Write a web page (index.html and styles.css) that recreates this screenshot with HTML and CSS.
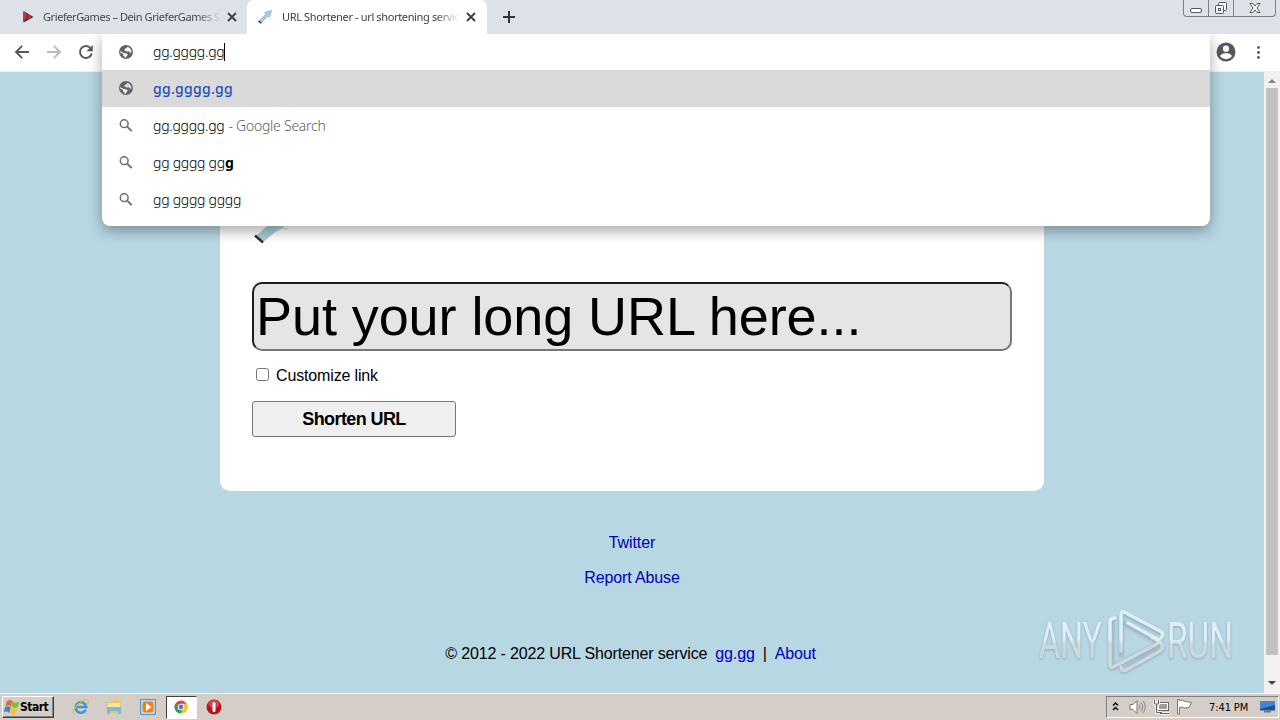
FILE: index.html
```html
<!DOCTYPE html>
<html lang="en">
<head>
<meta charset="utf-8">
<title>URL Shortener - url shortening service</title>
<link rel="stylesheet" href="styles.css">
</head>
<body>
<svg class="defs" width="0" height="0">
  <symbol id="globe" viewBox="0 0 16 16"><circle cx="8" cy="8" r="6.200" fill="none" stroke="#5f6368" stroke-width="1.500"/><path d="M2 7 5.500 8.500 8.500 9l1 1.500-1.500 1-.5 2.500A6 6 0 0 1 2 7z" fill="#f1f1f1"/><path d="M2.300 5.500A6.200 6.200 0 0 1 9.500 2L9 3.800l-2 .9-.8 1.500L8.500 7.500l2.300-.3 1.400 1.600 1.800-.3A6.200 6.200 0 0 1 8 14.200l.2-1.700 1.600-1.500-.8-1.500-3.200-.6L2 7z" fill="#5f6368"/><path d="M2.500 8.500 5 10l.3 1.700 1.500 1-.1 1.300A6 6 0 0 1 2 8z" fill="#5f6368"/></symbol>
  <symbol id="search" viewBox="0 0 16 16"><circle cx="6.200" cy="5.700" r="3.900" fill="none" stroke="#6b6e72" stroke-width="1.500"/><path d="m9.200 8.700 4.500 4.500" stroke="#6b6e72" stroke-width="1.900"/></symbol>
  <symbol id="close" viewBox="0 0 10 10"><path d="m1 1 8 8M9 1 1 9" stroke="#3c4043" stroke-width="1.900"/></symbol>
</svg>

<header class="tabstrip">
  <div class="tab">
    <svg class="fav" viewBox="0 0 16 16"><path d="M3.500 2 13.500 8 3.500 13.500z" fill="#383234"/><path d="m3 2.500 3.500 2V9L3 13zM7.500 5l4.200 3-4.200 2.300z" fill="#dc2937"/></svg>
    <span class="tab-title first">GrieferGames – Dein GrieferGames S</span>
    <svg class="x"><use href="#close"/></svg>
  </div>
  <div class="tab active">
    <svg class="fav" viewBox="0 0 16 16"><path d="M2 12 9 5 7.500 3.500 14.500 1.500 12.500 8.500 11 7l-7 7z" fill="#a8cce2" stroke="#8badc5" stroke-width=".7"/><path d="m1.500 12 2.700 2.200" stroke="#303b45" stroke-width="1.500"/></svg>
    <span class="tab-title second">URL Shortener - url shortening servic</span>
    <svg class="x"><use href="#close"/></svg>
  </div>
  <svg class="plus" viewBox="0 0 12 12"><path d="M6 0v12M0 6h12" stroke="#303338" stroke-width="2"/></svg>
  <div class="window-buttons">
    <span class="wb min"><svg width="14" height="16" viewBox="0 0 14 16"><rect x="1.500" y="8.500" width="11" height="4" rx="1.500" fill="#fff" stroke="#505762"/></svg></span>
    <span class="wb res"><svg width="14" height="16" viewBox="0 0 14 16"><g fill="#f4f6f9" stroke="#505762"><rect x="4.500" y="2.500" width="8" height="8" rx="1"/><rect x="1.500" y="5.500" width="8" height="8" rx="1"/><rect x="4.500" y="8.500" width="2" height="2"/></g></svg></span>
    <span class="wb cls"><svg width="14" height="16" viewBox="0 0 14 16"><path d="M2 3.500h3l2 2.500 2-2.500h3L9 8l3 4.500H9L7 10l-2 2.500H2L5 8z" fill="#fff" stroke="#505762"/></svg></span>
  </div>
</header>

<div class="toolbar">
  <svg class="nav" viewBox="0 0 16 16"><path d="M15 8H2.500M8.200 1.800 2 8l6.200 6.200" fill="none" stroke="#55595d" stroke-width="1.900"/></svg>
  <svg class="nav" viewBox="0 0 16 16"><path d="M1 8h12.500M7.800 1.800 14 8l-6.200 6.200" fill="none" stroke="#b9bbbe" stroke-width="1.900"/></svg>
  <svg class="nav" viewBox="0 0 16 16"><path d="M12.700 4.300A6 6 0 1 0 13.800 9.500" fill="none" stroke="#55595d" stroke-width="1.900"/><path d="M14.800 1v6.300H8.500z" fill="#55595d"/></svg>
  <span class="spacer"></span>
  <svg class="avatar" viewBox="0 0 20 20"><circle cx="10" cy="10" r="9.500" fill="#55595d"/><circle cx="10" cy="6.700" r="3.100" fill="#fff"/><path d="M4 14c1.500-2.200 4-2.700 6-2.700s4.500.5 6 2.700a7.300 7.300 0 0 1-12 0z" fill="#fff"/></svg>
  <svg class="dots" viewBox="0 0 4 16"><g fill="#55595d"><circle cx="2.500" cy="3.500" r="1.400"/><circle cx="2.500" cy="8.500" r="1.400"/><circle cx="2.500" cy="13.500" r="1.400"/></g></svg>
</div>

<section class="omnibox">
  <div class="row query"><svg><use href="#globe"/></svg><span class="q">gg.gggg.gg</span><i class="caret"></i></div>
  <div class="row selected"><svg><use href="#globe"/></svg><span class="url">gg.gggg.gg</span></div>
  <div class="row"><svg><use href="#search"/></svg><span class="q">gg.gggg.gg</span><span class="muted">- Google Search</span></div>
  <div class="row"><svg><use href="#search"/></svg><span class="q">gg gggg gg<b>g</b></span></div>
  <div class="row"><svg><use href="#search"/></svg><span class="q">gg gggg gggg</span></div>
</section>

<div class="viewport">
  <main class="page">
    <div class="card">
      <svg class="logo" width="44" height="44" viewBox="0 0 44 44"><path d="M3 35 28 12 40 20 11 38z" fill="#a9cbd9"/><path d="m3 34 7.500 6.500L32 22" fill="#a9cbd9" stroke="#c9d4d8"/><path d="m3 33.500 8 7" stroke="#2e3336" stroke-width="2.500"/><path d="m29 26 7 1" stroke="#dddcdc"/></svg>
      <form class="form">
        <input class="long-url" type="text" value="Put your long URL here...">
        <label class="custom"><input type="checkbox"><span>Customize link</span></label>
        <button class="shorten" type="button">Shorten URL</button>
      </form>
    </div>
    <nav class="links"><a>Twitter</a><a>Report Abuse</a></nav>
    <footer class="foot"><span>© 2012 - 2022 URL Shortener service</span><a>gg.gg</a><span>|</span><a>About</a></footer>
  </main>
  <aside class="scrollbar">
    <svg width="8" height="4" viewBox="0 0 8 4"><path d="M0 4 4 0l4 4z" fill="#888"/></svg>
    <span class="thumb"></span>
    <svg width="8" height="4" viewBox="0 0 8 4"><path d="m0 0 4 4 4-4z" fill="#444"/></svg>
  </aside>
</div>

<svg class="watermark" width="204" height="68" viewBox="0 0 204 68">
  <defs><linearGradient id="wg" x1="0" y1="0" x2="0" y2="68" gradientUnits="userSpaceOnUse"><stop offset=".47" stop-color="#e0eff7"/><stop offset=".55" stop-color="#ced9df"/></linearGradient></defs>
  <g class="wm-text" fill="url(#wg)"><text x="3" y="51" textLength="63" lengthAdjust="spacingAndGlyphs">ANY</text><text x="131" y="51" textLength="66" lengthAdjust="spacingAndGlyphs">RUN</text></g>
  <g fill="none" stroke="#9fb8c4" stroke-width="5.500" stroke-linejoin="round" opacity=".4"><path d="M76 12v48l49-24-40-22v36M86 5l40 21M86 63l42-24"/></g>
  <g fill="none" stroke="url(#wg)" stroke-width="3.600" stroke-linejoin="round" stroke-linecap="round"><path d="M79 11q-5 0-5 4v42q0 5 5 2l42-22q4-3 0-5L92 16M85 44V8q0-5 5-2l34 18q5 3 1 7M85 60q0 5 5 3l34-19q5-4 0-9l-8-5"/></g>
</svg>

<footer class="taskbar">
  <div class="start"><svg width="17" height="16" viewBox="0 0 17 16"><path d="M4 2q3-2 5.500 0L8 7.500Q5 5.500 2.200 7.500z" fill="#ef6532"/><path d="M9.500 2q3 3 7 .5L14.800 8q-3 2-6.500-.2z" fill="#7ebd45"/><path d="M2.200 8Q5 6.500 7.700 8.200L6.200 14q-2.500-2.500-5.500-.5z" fill="#3c86cf"/><path d="M8.200 8.500q3 2 6.500.2L13 14.500q-3 2-6.500-.5z" fill="#f6c13c"/></svg><span>Start</span></div>
  <div class="task ie"><svg viewBox="0 0 18 18"><path d="M13.700 11.800A5.300 5.300 0 1 1 14.200 9H5" fill="none" stroke="#329bd8" stroke-width="2.600"/><path d="M2 16Q-1 13 6 6.500T16 2q1.500 2-1.500 5" fill="none" stroke="#e7bd43" stroke-width="1.200"/></svg></div>
  <div class="task"><svg viewBox="0 0 18 18"><path d="M2 4h5l1-2h6v2h2v11H2z" fill="#eac75b"/><path d="M3 5h12v4H3z" fill="#f9e8a0"/><path d="M2 9h14v7h-3v-3H5v3H2z" fill="#7fb8d8"/></svg></div>
  <div class="task"><svg viewBox="0 0 18 18"><rect x="1.500" y="1.500" width="15" height="15" fill="#b2d8f0" stroke="#5c94c5"/><rect x="3.500" y="3.500" width="11" height="11" rx="3" fill="#f08218"/><path d="m7 5 5.500 4L7 13z" fill="#fff"/></svg></div>
  <div class="task pressed"><svg viewBox="0 0 18 18"><circle cx="9" cy="9" r="6.500" fill="#e24436"/><path d="M3.400 5.700A6.500 6.500 0 0 0 8.400 15.500L11.500 10.500 9 9z" fill="#32a450"/><path d="M14.700 5.700A6.500 6.500 0 0 1 8.400 15.500L12 10 9 5.700z" fill="#f9c927"/><circle cx="9" cy="9" r="3.200" fill="#fff"/><circle cx="9" cy="9" r="2.400" fill="#4779df"/></svg></div>
  <div class="task"><svg viewBox="0 0 18 18"><circle cx="9" cy="9" r="7.500" fill="#b5141d"/><ellipse cx="9" cy="6" rx="5.500" ry="4" fill="#d04448"/><rect x="7.500" y="4" width="3" height="10" rx="1.500" fill="#fff"/></svg></div>
  <div class="tray">
    <svg width="7" height="10" viewBox="0 0 7 10"><path d="m1 3.500 2.500-2.500L6 3.500M1 8l2.500-2.500L6 8" fill="none" stroke="#000" stroke-width="1.400"/></svg>
    <svg class="sound" width="17" height="16" viewBox="0 0 17 16"><path d="M1 5.500h3L8 1.500v13L4 10.500H1z" fill="#fff" stroke="#777"/><path d="M10 5.500q2 2.500 0 5M12 3.500q3.500 4.500 0 9M14 2q4.500 6 0 12" fill="none" stroke="#888"/></svg>
    <svg class="net" width="17" height="16" viewBox="0 0 17 16"><rect x="4.500" y="3.500" width="11" height="8" fill="#9d9d9d" stroke="#666"/><rect x="5.500" y="4.500" width="9" height="6" fill="none" stroke="#fff"/><path d="M1.500 1v4h4V1M3.500 5v8.500H9M8 14.500h8" fill="none" stroke="#fff" stroke-width="2.500"/><path d="M1.500 1v4h4V1M3.500 5v8.500H9M7 14.500h9" fill="none" stroke="#666"/></svg>
    <svg class="flag" width="17" height="16" viewBox="0 0 17 16"><path d="M.5.5h2v1q3-1 6 1l6 1-2.500 5-5 .5q-1.500-1.500-4.500-.5v6.500H.5z" fill="#fff" stroke="#777"/></svg>
    <time>7:41 PM</time>
    <svg class="desk" width="16" height="14" viewBox="0 0 16 14"><path d="M0 1h15v9.500H0z" fill="#1c4f9c"/><path d="M0 1h15v4L0 9z" fill="#4686cf"/><path d="M4 10.500h7v2H4z" fill="#60788d"/></svg>
  </div>
</footer>
</body>
</html>
```
FILE: styles.css
```css
* { box-sizing: border-box; }
body { margin: 0; width: 1280px; height: 720px; overflow: hidden; position: relative; display: flex; flex-direction: column; background: #fff; font: 16px "Liberation Sans", Arial, sans-serif; }
svg { display: block; flex: none; }
.defs { position: absolute; }

.tabstrip { height: 34px; flex: none; display: flex; background: #dee1e8; font: 11px "Noto Sans", Tahoma, sans-serif; }
.tab { display: flex; align-items: center; width: 247px; padding: 0 10px 1px 20px; color: #45484c; }
.tab.active { width: 240px; padding: 0 11px 1px 10px; background: #fff; color: #3c4043; border-radius: 7px 7px 0 0; }
.fav { width: 16px; height: 16px; }
.tab-title { width: 178px; margin-left: 7px; white-space: nowrap; mask-image: linear-gradient(90deg, #000 86%, transparent 100%); }
.first { letter-spacing: -.42px; }
.second { letter-spacing: -.36px; }
.tab .x { width: 10px; height: 10px; margin-left: 6px; }
.tab.active .tab-title { margin-left: 9px; width: 178px; }
.plus { width: 12px; height: 12px; margin: 11px 0 0 16px; }
.window-buttons { display: flex; width: 93px; height: 17px; margin: 0 4px 0 auto; border: 1px solid #777f8b; border-top: 0; border-radius: 0 0 4px 4px; }
.wb { display: flex; justify-content: center; width: 25px; border-right: 1px solid #777f8b; }
.wb.cls { flex: 1; border: 0; }

.toolbar { height: 38px; flex: none; display: flex; align-items: center; gap: 16px; padding: 0 20px 2px 14px; background: #fff; border-bottom: 1px solid #f0f0f0; }
.nav { width: 16px; height: 16px; }
.spacer { flex: 1; }
.avatar { width: 20px; height: 20px; }
.dots { width: 4px; height: 16px; margin-left: 4px; }

.omnibox { position: absolute; z-index: 3; left: 102px; top: 34px; width: 1108px; height: 192px; background: #fff; border-radius: 0 0 8px 8px; box-shadow: 0 5px 14px rgba(0,0,0,.34); clip-path: inset(0 -30px -30px -30px); font: 14px "Noto Sans", Tahoma, sans-serif; color: #000; }
.row { display: flex; align-items: center; height: 37px; padding-left: 16px; white-space: nowrap; }
.row svg { width: 16px; height: 16px; margin-right: 19px; }
.row.query { height: 35px; margin-bottom: 1px; }
.row.selected { background: #dadada; }
.row.selected svg { margin-bottom: 1px; }
.q { letter-spacing: -.25px; font-weight: 350; }
.q b { font-weight: 700; }
.url { color: #2450b8; font-weight: 500; letter-spacing: .3px; }
.caret { width: 1px; height: 18px; background: #000; }
.muted { margin-left: 4px; color: #5b5e62; font-weight: 300; letter-spacing: -.25px; }

.viewport { height: 621px; flex: none; display: flex; background: #b7d7e3; }
.page { width: 1264px; display: flex; flex-direction: column; align-items: center; }
.card { width: 824px; height: 419px; flex: none; background: #fff; border-radius: 0 0 10px 10px; padding: 130px 32px 0; }
.form { display: flex; flex-direction: column; align-items: flex-start; margin-top: 36px; }
.long-url { width: 760px; height: 69px; margin: 0; padding: 0 2px 2px 2px; border: 2px solid; border-color: #1e1e1e #767676 #767676 #1e1e1e; border-radius: 10px; background: #e5e5e5; color: #000; font: 54px "Liberation Sans", Arial, sans-serif; letter-spacing: -.08px; }
.custom { display: flex; align-items: center; height: 20px; margin-top: 14px; }
.custom span { padding-top: 2px; letter-spacing: -.15px; }
.custom input { width: 13px; height: 13px; margin: 0 7px 2px 4px; }
.shorten { width: 204px; height: 36px; margin-top: 16px; padding: 0; border: 1px solid #767676; border-radius: 3px; background: #efefef; color: #000; font: bold 18px "Liberation Sans", Arial, sans-serif; letter-spacing: -.6px; }
.links { display: flex; flex-direction: column; align-items: center; gap: 17px; margin-top: 43px; line-height: 18px; letter-spacing: -.12px; }
a { color: #0000b4; }
.foot { display: flex; gap: 8px; margin: 58px 3px 0 0; line-height: 18px; white-space: nowrap; letter-spacing: -.15px; }
.scrollbar { width: 16px; display: flex; flex-direction: column; align-items: center; background: #f1f1f1; padding: 7px 0 8px; }
.thumb { width: 12px; height: 567px; margin: 5px 0 auto; background: #c1c1c1; }

.watermark { position: absolute; left: 1036px; top: 607px; overflow: visible; filter: drop-shadow(0 1px 1px rgba(100,125,140,.5)); }
.wm-text { font: 400 50px Roboto, sans-serif; }

.taskbar { height: 27px; flex: none; display: flex; align-items: center; background: #d5cec8; border-top: 1px solid #fff; font: 11px "DejaVu Sans Condensed", Tahoma, sans-serif; color: #000; }
.start { display: flex; align-items: center; width: 52px; height: 22px; margin: 0 10px 0 2px; border: 1px solid; border-color: #fff #404040 #404040 #fff; box-shadow: inset -1px -1px #808080; font-size: 12px; font-weight: bold; letter-spacing: -.5px; }
.task { width: 33.5px; height: 23px; display: flex; align-items: center; justify-content: center; }
.task svg { width: 18px; height: 18px; }
.task.pressed { width: 31px; margin: 0 1px; background: #fff; border: 1px solid; border-color: #404040 #fff #fff #404040; }
.tray { display: flex; align-items: center; width: 173px; height: 22px; margin: 0 1px 0 auto; padding-left: 5px; border: 1px solid; border-color: #808080 #fff #fff #808080; }
.sound { margin-left: 10px; }
.net { margin-left: 7px; }
.flag { margin-left: 7px; }
.tray time { width: 42px; margin-left: 15px; white-space: nowrap; letter-spacing: -.1px; }
.desk { margin-left: 9px; }
```
